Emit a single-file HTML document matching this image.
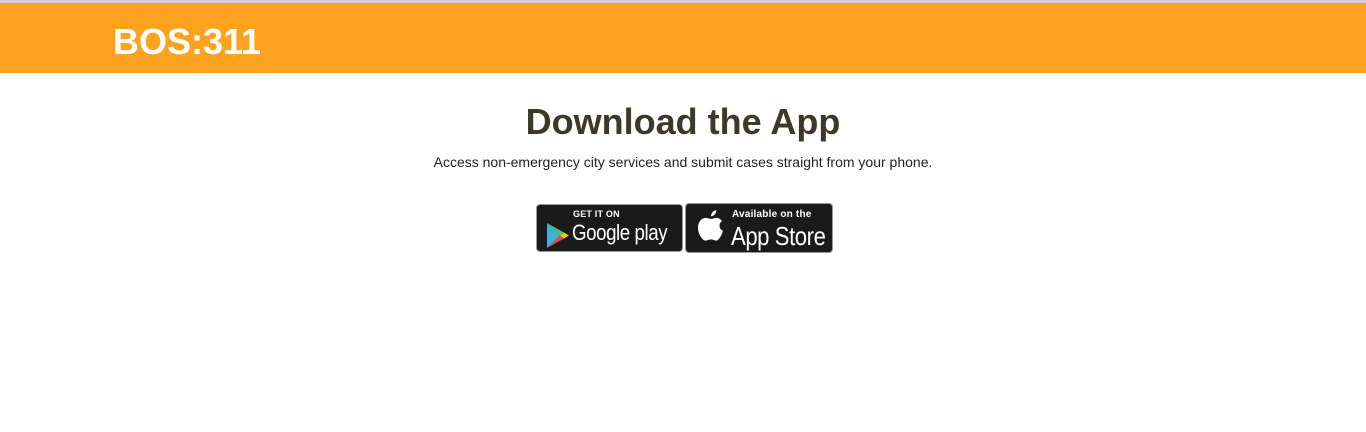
<!DOCTYPE html>
<html><head><meta charset="utf-8">
<style>
html,body{margin:0;padding:0;background:#fff;width:1366px;height:432px;overflow:hidden;font-family:"Liberation Sans",Arial,sans-serif}
.top{height:3px;background:#d0d0d0}
.bar{height:70px;background:#ffa31e;position:relative}
.bar h1{position:absolute;left:113px;top:0;margin:0;line-height:78px;font-size:36px;font-weight:bold;color:#fff}
h2{position:absolute;left:0;width:1366px;top:100px;margin:0;text-align:center;font-size:36px;line-height:44px;color:#3b3a28;font-weight:bold}
p{position:absolute;left:0;width:1366px;top:154px;margin:0;text-align:center;font-size:14px;line-height:17px;color:#222}
.b{position:absolute;background:#1a1a1a;border:1px solid #999;border-radius:4px;color:#fff;box-sizing:border-box;white-space:nowrap}
.g{left:536px;top:204px;width:147px;height:48px}
.a{left:685px;top:203px;width:148px;height:50px}
.s{position:absolute;font-size:9px;font-weight:bold;letter-spacing:.2px}
.l{position:absolute;font-size:22px;transform-origin:0 0;transform:scaleX(.85);letter-spacing:-.5px}
</style></head><body>
<div class="top"></div>
<div class="bar"><h1>BOS:311</h1></div>
<h2>Download the App</h2>
<p>Access non-emergency city services and submit cases straight from your phone.</p>
<div class="b g">
<svg style="position:absolute;left:10px;top:18px" width="22" height="25" viewBox="0 0 22 25">
<path d="M0 0 L13 12.5 L0 25Z" fill="#3bb2d8"/>
<path d="M0 0 L17 9.5 L13 12.5Z" fill="#48c46a"/>
<path d="M0 25 L17 15.5 L13 12.5Z" fill="#e74a3f"/>
<path d="M17 9.5 L22 12.5 L17 15.5 L13 12.5Z" fill="#f6c22a"/>
</svg>
<span class="s" style="left:36px;top:4px">GET IT ON</span>
<span class="l" style="left:35px;top:15px">Google play</span>
</div>
<div class="b a">
<svg style="position:absolute;left:12px;top:6px" width="26" height="33" viewBox="0 0 24 30">
<path d="M17 0c0 3-2.5 5.5-5 5.5 0-3 2.5-5.5 5-5.5z" fill="#fff"/>
<path d="M12 8c2 0 3-1 5-1 2 0 4 1 5 3-3 2-3 7 1 9-1 4-4 9-6 9-2 0-2.5-1-5-1s-3 1-5 1C4 28 0 22 0 16 0 10 4 7 7 7c2 0 3 1 5 1z" fill="#fff"/>
</svg>
<span class="s" style="left:46px;top:5px;font-size:10px">Available on the</span>
<span class="l" style="left:45px;top:17px;font-size:26px">App Store</span>
</div>
</body></html>
